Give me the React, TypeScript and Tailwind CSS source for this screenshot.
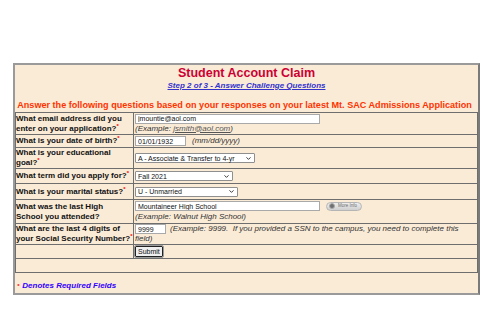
import React from 'react';
import { ChevronDown } from 'lucide-react';

const Req = () => <span className="text-[#ff0000] text-[6px] leading-none relative -top-[3px]">*</span>;

const Field = ({ value, w }: { value: string; w: string }) => (
  <input
    readOnly
    value={value}
    className={`${w} h-[10px] bg-white border border-[#a9a9a9] px-[2px] text-[7px] leading-none text-[#111] outline-none`}
  />
);

const Pick = ({ value, w }: { value: string; w: string }) => (
  <div className={`${w} h-[10px] bg-white border border-[#8f8f8f] rounded-[1px] flex items-center justify-between px-[2px]`}>
    <span className="text-[7px] leading-none text-[#111] whitespace-nowrap">{value}</span>
    <ChevronDown size={7} strokeWidth={3} className="text-[#222]" />
  </div>
);

const Example = ({ children }: { children: React.ReactNode }) => (
  <span className="italic text-[8px] leading-[10px] text-[#333]">{children}</span>
);

const rows: { label: React.ReactNode; h: string; cell: React.ReactNode }[] = [
  {
    label: <>What email address did you<br />enter on your application?<Req /></>,
    h: 'h-[22px]',
    cell: (
      <div className="flex flex-col">
        <Field value="jmountie@aol.com" w="w-[185px]" />
        <Example>(Example: <span className="underline text-[#555]">jsmith@aol.com</span>)</Example>
      </div>
    ),
  },
  {
    label: <>What is your date of birth?<Req /></>,
    h: 'h-[13px]',
    cell: (
      <div className="flex items-center gap-[6px]">
        <Field value="01/01/1932" w="w-[51px]" />
        <Example>(mm/dd/yyyy)</Example>
      </div>
    ),
  },
  {
    label: <>What is your educational<br />goal?<Req /></>,
    h: 'h-[21px]',
    cell: <Pick value="A - Associate & Transfer to 4-yr" w="w-[120px]" />,
  },
  {
    label: <>What term did you apply for?<Req /></>,
    h: 'h-[15px]',
    cell: <Pick value="Fall 2021" w="w-[98px]" />,
  },
  {
    label: <>What is your marital status?<Req /></>,
    h: 'h-[16px]',
    cell: <Pick value="U - Unmarried" w="w-[103px]" />,
  },
  {
    label: <>What was the last High<br />School you attended?</>,
    h: 'h-[24px]',
    cell: (
      <div className="flex flex-col gap-[1px]">
        <div className="flex items-center gap-[6px]">
          <Field value="Mountaineer High School" w="w-[185px]" />
          <div className="h-[9px] w-[36px] rounded-full border border-[#b5b5b5] bg-gradient-to-b from-[#eeeeee] to-[#cfcfcf] flex items-center gap-[3px] px-[2px]">
            <span className="w-[6px] h-[6px] rounded-full bg-[#6f6f6f] border border-[#aaaaaa]" />
            <span className="text-[4.5px] leading-none text-[#6a6a6a]">More Info</span>
          </div>
        </div>
        <Example>(Example: Walnut High School)</Example>
      </div>
    ),
  },
  {
    label: <>What are the last 4 digits of<br />your Social Security Number?<Req /></>,
    h: 'h-[21px]',
    cell: (
      <div className="text-[8px] leading-[10px]">
        <Field value="9999" w="w-[31px] float-left mr-[4px]" />
        <Example>(Example: 9999.&nbsp; If you provided a SSN to the campus, you need to complete this field)</Example>
      </div>
    ),
  },
  {
    label: null,
    h: 'h-[14px]',
    cell: (
      <button className="h-[11px] px-[2px] border border-[#222] outline outline-1 outline-[#9a9a9a] bg-[#efefef] text-[7px] leading-none text-[#111] rounded-[1px]">
        Submit
      </button>
    ),
  },
];

export default function App() {
  return (
    <div className="w-[499px] h-[333px] bg-white pt-[63px] pl-[13px] font-['Liberation_Sans',Arial,sans-serif]">
      <div className="w-[467px] bg-[#faebd7] border-2 border-[#9a9a9a] border-r-[#7a7a7a]">
        <div className="flex flex-col items-center h-[47px]">
          <div className="text-[12.5px] font-bold text-[#cc0033] leading-[15px] mt-[1px]">Student Account Claim</div>
          <a className="text-[8px] font-bold italic underline text-[#3333cc] leading-[10px]">Step 2 of 3 - Answer Challenge Questions</a>
          <div className="text-[9.1px] font-bold text-[#ff3300] leading-[11px] mt-[9px] whitespace-nowrap -translate-x-[2px]">
            Answer the following questions based on your responses on your latest Mt. SAC Admissions Application
          </div>
        </div>
        <div className="border border-[#6e6e6e] text-[8px] leading-[10px] text-[#111]">
          {rows.map((r, i) => (
            <div key={i} className={`flex ${r.h} border-b border-[#6e6e6e]`}>
              <div className="w-[118px] shrink-0 border-r border-[#6e6e6e] flex items-center font-bold whitespace-nowrap">
                <div>{r.label}</div>
              </div>
              <div className="flex-1 flex items-center pl-[1px] overflow-hidden">{r.cell}</div>
            </div>
          ))}
          <div className="h-[13px]" />
        </div>
        <div className="h-[20px] flex items-center px-[2px] pt-[6px] text-[8px] font-bold italic text-[#3300ff]">
          <span className="text-[#ff0000] text-[6px] mr-[3px]">*</span>Denotes Required Fields
        </div>
      </div>
    </div>
  );
}
